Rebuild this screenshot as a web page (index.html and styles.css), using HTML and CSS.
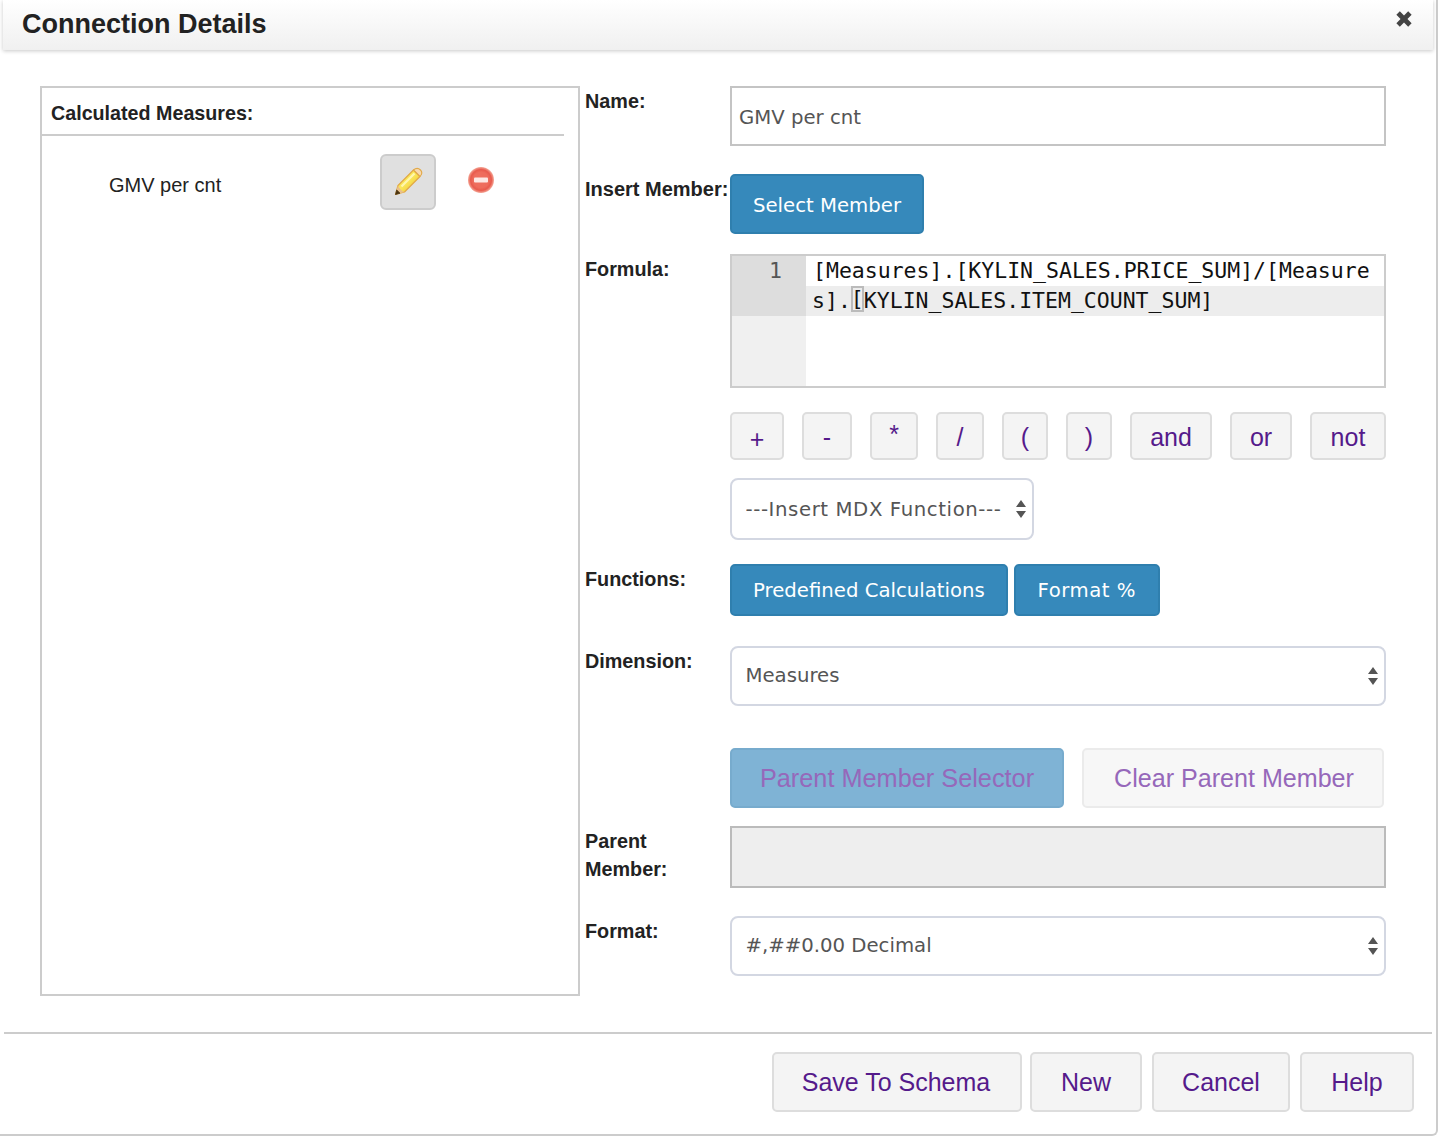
FILE: index.html
```html
<!DOCTYPE html>
<html>
  <head>
    <title>Connection Details</title>
    <meta name="viewport" content="width=device-width, initial-scale=1" />
    <link rel="stylesheet" href="styles.css">
  </head>
  <body>
    <div class="dialog">
      <div class="dialog-header">
        <h1>Connection Details</h1>
        <button class="close-btn" aria-label="Close">
          <svg width="16" height="16" viewBox="1.5 1.5 13 13">
            <path d="M1.800 4.600 4.600 1.800 8 5.200 11.400 1.800 14.200 4.600 10.800 8 14.200 11.400 11.400 14.200 8 10.800 4.600 14.200 1.800 11.400 5.200 8Z" fill="#444" />
          </svg>
        </button>
      </div>

      <div class="dialog-body">
        <div class="measures">
          <div class="measures-title">Calculated Measures:</div>
          <div class="measure-item">
            <span class="measure-name">GMV per cnt</span>
            <button class="edit-btn" aria-label="Edit">
              <svg width="30" height="30" viewBox="0 0 30 30">
                <defs>
                  <linearGradient id="pencilFill" x1="0" y1="0" x2="1" y2="1">
                    <stop offset="0" stop-color="#f3c93a" />
                    <stop offset="0.45" stop-color="#fbe95a" />
                    <stop offset="1" stop-color="#e9b52c" />
                  </linearGradient>
                  <filter id="soft" x="-10%" y="-10%" width="120%" height="120%">
                    <feGaussianBlur stdDeviation="0.35" />
                  </filter>
                </defs>
                <g filter="url(#soft)">
                  <path d="M2.500 27.500 5 18.500 20.500 3 27 9.500 11.500 25Z" fill="url(#pencilFill)" stroke="#e2a948" stroke-width="1.200" stroke-linejoin="round" />
                  <path d="M8.500 19.500 21.500 6.500" stroke="#fff6b0" stroke-width="2.200" />
                  <path d="M20.500 3C23 0.800 25.500 1 27.500 3S29.300 7 27 9.500Z" fill="#f7d9b0" stroke="#e2a948" stroke-width="1.100" stroke-linejoin="round" />
                  <path d="M2.500 27.500 5 18.500C6 21 8.500 24 11.500 25Z" fill="#e9c08c" />
                  <path d="M2.500 27.500 3.700 23 7 26.200Z" fill="#4a3410" stroke="#4a3410" stroke-width="0.800" stroke-linejoin="round" />
                </g>
              </svg>
            </button>
            <button class="delete-btn" aria-label="Delete">
              <svg width="28" height="28" viewBox="0 0 28 28">
                <defs>
                  <radialGradient id="deleteFill" cx="0.5" cy="0.5" r="0.5">
                    <stop offset="0" stop-color="#ee7060" />
                    <stop offset="0.6" stop-color="#ee6c5c" />
                    <stop offset="0.8" stop-color="#e8594c" />
                    <stop offset="1" stop-color="#f4a898" />
                  </radialGradient>
                </defs>
                <g filter="url(#soft)">
                  <circle cx="14" cy="14" r="13" fill="url(#deleteFill)" />
                  <rect x="7" y="11.500" width="14" height="5" rx="1" fill="#fde8e4" />
                </g>
              </svg>
            </button>
          </div>
        </div>

        <form class="form">
          <div class="row">
            <label class="row-label">Name:</label>
            <input class="text-input" type="text" value="GMV per cnt" />
          </div>

          <div class="row row-member">
            <label class="row-label">Insert Member:</label>
            <div><button type="button" class="btn-blue btn-select">Select Member</button></div>
          </div>

          <div class="row row-formula">
            <label class="row-label">Formula:</label>
            <div class="editor">
              <div class="editor-gutter"><div class="editor-num">1</div></div>
              <div class="editor-code">
                <div class="code-line">[Measures].[KYLIN_SALES.PRICE_SUM]/[Measure</div>
                <div class="code-line code-active">s].<span class="code-cursor">[</span>KYLIN_SALES.ITEM_COUNT_SUM]</div>
              </div>
            </div>
          </div>

          <div class="row row-ops">
            <span></span>
            <div class="ops">
              <button type="button" class="btn-op btn-plus">+</button>
              <button type="button" class="btn-op">-</button>
              <button type="button" class="btn-op btn-star">*</button>
              <button type="button" class="btn-op">/</button>
              <button type="button" class="btn-op">(</button>
              <button type="button" class="btn-op">)</button>
              <button type="button" class="btn-op">and</button>
              <button type="button" class="btn-op">or</button>
              <button type="button" class="btn-op">not</button>
            </div>
          </div>

          <div class="row row-mdx">
            <span></span>
            <div class="select-wrap select-mdx">
              <select class="select"><option>---Insert MDX Function---</option></select>
              <svg class="select-arrows" width="10" height="18" viewBox="0 0 10 18"><path d="M5 0 10 7H0ZM5 18 0 11H10Z" fill="#555" /></svg>
            </div>
          </div>

          <div class="row row-functions">
            <label class="row-label">Functions:</label>
            <div class="func-btns">
              <button type="button" class="btn-blue btn-func">Predefined Calculations</button>
              <button type="button" class="btn-blue btn-func btn-format">Format %</button>
            </div>
          </div>

          <div class="row row-dimension">
            <label class="row-label">Dimension:</label>
            <div class="select-wrap">
              <select class="select"><option>Measures</option></select>
              <svg class="select-arrows" width="10" height="18" viewBox="0 0 10 18"><path d="M5 0 10 7H0ZM5 18 0 11H10Z" fill="#555" /></svg>
            </div>
          </div>

          <div class="row row-parent-btns">
            <span></span>
            <div class="parent-btns">
              <button type="button" class="btn-parent btn-parent-select">Parent Member Selector</button>
              <button type="button" class="btn-parent btn-parent-clear">Clear Parent Member</button>
            </div>
          </div>

          <div class="row row-parent">
            <label class="row-label">Parent Member:</label>
            <div class="parent-field"></div>
          </div>

          <div class="row row-format">
            <label class="row-label">Format:</label>
            <div class="select-wrap">
              <select class="select"><option>#,##0.00 Decimal</option></select>
              <svg class="select-arrows" width="10" height="18" viewBox="0 0 10 18"><path d="M5 0 10 7H0ZM5 18 0 11H10Z" fill="#555" /></svg>
            </div>
          </div>
        </form>
      </div>

      <div class="dialog-footer">
        <button class="btn-foot btn-save">Save To Schema</button>
        <button class="btn-foot btn-new">New</button>
        <button class="btn-foot btn-cancel">Cancel</button>
        <button class="btn-foot btn-help">Help</button>
      </div>
    </div>
  </body>
</html>
```

FILE: styles.css
```css
* {
  box-sizing: border-box;
}

body {
  margin: 0;
  font-family: "Liberation Sans", Arial, sans-serif;
  color: #222;
  background: #fff;
  overflow: hidden;
}

button,
input,
select {
  font-family: inherit;
  margin: 0;
}

.dialog {
  width: 1438px;
  height: 1136px;
  display: flex;
  flex-direction: column;
  border-right: 2px solid #ccc;
  border-bottom: 2px solid #ccc;
  border-bottom-right-radius: 6px;
}

.dialog-header {
  height: 50px;
  margin: 0 3px;
  width: 1430px;
  display: flex;
  justify-content: space-between;
  padding: 9px 21px 0 19px;
  background: linear-gradient(to bottom, #fff, #f0f0f0);
  box-shadow: 0 1px 4px rgba(0, 0, 0, 0.22);
}

h1 {
  margin: 0;
  font-size: 27px;
  line-height: 30px;
  font-weight: bold;
}

.close-btn {
  width: 16px;
  height: 16px;
  padding: 0;
  margin-top: 2px;
  border: none;
  background: none;
}

.dialog-body {
  display: flex;
  gap: 5px;
  padding: 36px 0 0 40px;
  height: 982px;
  flex: none;
}

/* left list */
.measures {
  width: 540px;
  height: 910px;
  border: 2px solid #ccc;
}

.measures-title {
  width: 522px;
  height: 48px;
  padding: 13px 0 0 9px;
  font-size: 19.7px;
  line-height: 24px;
  font-weight: bold;
  border-bottom: 2px solid #ccc;
}

.measure-item {
  display: flex;
  align-items: flex-start;
  margin-top: 18px;
  padding-left: 67px;
}

.measure-name {
  width: 271px;
  margin-top: 18px;
  font-size: 20px;
  line-height: 26px;
}

.edit-btn {
  width: 56px;
  height: 56px;
  padding: 0;
  display: flex;
  align-items: center;
  justify-content: center;
  background: #e0e0e0;
  border: 2px solid #ccc;
  border-radius: 6px;
}

.delete-btn {
  width: 28px;
  height: 28px;
  padding: 0;
  margin: 12px 0 0 31px;
  border: none;
  background: none;
}

/* right form */
.form {
  width: 801px;
}

.row {
  display: grid;
  grid-template-columns: 145px 656px;
  align-items: start;
}

.row-label {
  display: block;
  font-size: 19.8px;
  line-height: 28px;
  font-weight: bold;
  white-space: normal;
  margin-top: 1px;
}

.row-member {
  margin-top: 28px;
}

.row-formula {
  margin-top: 20px;
}

.row-ops {
  margin-top: 24px;
}

.row-mdx {
  margin-top: 18px;
}

.row-functions {
  margin-top: 24px;
}

.row-dimension {
  margin-top: 30px;
}

.row-parent-btns {
  margin-top: 42px;
}

.row-parent {
  margin-top: 18px;
}

.row-format {
  margin-top: 28px;
}

.row-member .row-label {
  white-space: nowrap;
  font-size: 20px;
}

.text-input {
  width: 656px;
  height: 60px;
  padding: 2px 7px 0;
  font-family: "DejaVu Sans", Verdana, sans-serif;
  font-size: 19.7px;
  color: #555;
  border: 2px solid #c4c4c4;
  background: #fff;
  outline: none;
}

.btn-blue {
  color: #fff;
  font-family: "DejaVu Sans", Verdana, sans-serif;
  font-size: 19.7px;
  background: #3689bb;
  border: 2px solid #2f7fae;
  border-radius: 5px;
  padding: 0;
}

.btn-select {
  width: 194px;
  height: 60px;
  padding-top: 2px;
}

.editor {
  height: 134px;
  display: flex;
  border: 2px solid #ccc;
  background: #fff;
}

.editor-gutter {
  width: 74px;
  background: #f0f0f0;
}

.editor-num {
  height: 60px;
  padding-right: 24px;
  text-align: right;
  background: #ddd;
  color: #555;
  font-family: "DejaVu Sans Mono", monospace;
  font-size: 21.5px;
  line-height: 30px;
}

.editor-code {
  flex: 1;
  font-family: "DejaVu Sans Mono", monospace;
  font-size: 21.5px;
  line-height: 30px;
  color: #111;
}

.code-line {
  height: 30px;
  padding-left: 7px;
  white-space: pre;
}

.code-active {
  background: #ededed;
  padding-left: 6px;
}

.code-cursor {
  display: inline-block;
  height: 26px;
  line-height: 26px;
  vertical-align: top;
  box-shadow: inset 0 0 0 2px #bbb;
}

.ops {
  display: grid;
  grid-template-columns: 54px 50px 48px 48px 46px 46px 82px 62px 76px;
  column-gap: 18px;
}

.btn-op {
  height: 48px;
  padding: 2px 0 0;
  font-size: 25px;
  color: #551a8b;
  background: #f4f4f4;
  border: 2px solid #ddd;
  border-radius: 5px;
}

.btn-plus {
  padding-top: 6px;
}

.btn-star {
  padding: 0 0 4px;
}

.select-wrap {
  position: relative;
  width: 656px;
  height: 60px;
}

.select-mdx {
  width: 304px;
  height: 62px;
}

.select-mdx .select {
  padding-bottom: 0;
  letter-spacing: 0.6px;
}

.select {
  width: 100%;
  height: 100%;
  padding: 0 14px 2px 13.5px;
  appearance: none;
  font-family: "DejaVu Sans", Verdana, sans-serif;
  font-size: 19.7px;
  color: #555;
  background: #fff;
  border: 2px solid #d3d7e2;
  border-radius: 8px;
  outline: none;
}

.select-arrows {
  position: absolute;
  right: 8px;
  top: 50%;
  margin-top: -9px;
}

.func-btns {
  display: flex;
  gap: 6px;
}

.btn-func {
  height: 52px;
  padding: 0 21px;
}

.btn-format {
  width: 146px;
  letter-spacing: 0.5px;
}

.parent-btns {
  display: flex;
  gap: 18px;
}

.btn-parent {
  height: 60px;
  font-size: 25.3px;
  padding: 0;
  color: #9668ba;
  border-radius: 5px;
}

.btn-parent-select {
  width: 334px;
  background: #7fb3d5;
  border: 2px solid #77abcd;
}

.btn-parent-clear {
  width: 302px;
  padding-left: 2px;
  font-size: 25.1px;
  background: #f7f7f7;
  border: 2px solid #ebebeb;
}

.parent-field {
  height: 62px;
  background: #eee;
  border: 2px solid #bbb;
}

.row-parent .row-label {
  width: 110px;
}

/* footer */
.dialog-footer {
  width: 1428px;
  height: 78px;
  margin-left: 4px;
  padding: 18px 18px 0 0;
  display: flex;
  justify-content: flex-end;
  border-top: 2px solid #ccc;
}

.btn-foot {
  height: 60px;
  padding: 0;
  font-size: 25px;
  color: #551a8b;
  background: #f4f4f4;
  border: 2px solid #ddd;
  border-radius: 5px;
}

.btn-save {
  width: 250px;
  padding-right: 2px;
}

.btn-new {
  width: 112px;
  margin-left: 8px;
}

.btn-cancel {
  width: 138px;
  margin-left: 10px;
}

.btn-help {
  width: 114px;
  margin-left: 10px;
}
```
